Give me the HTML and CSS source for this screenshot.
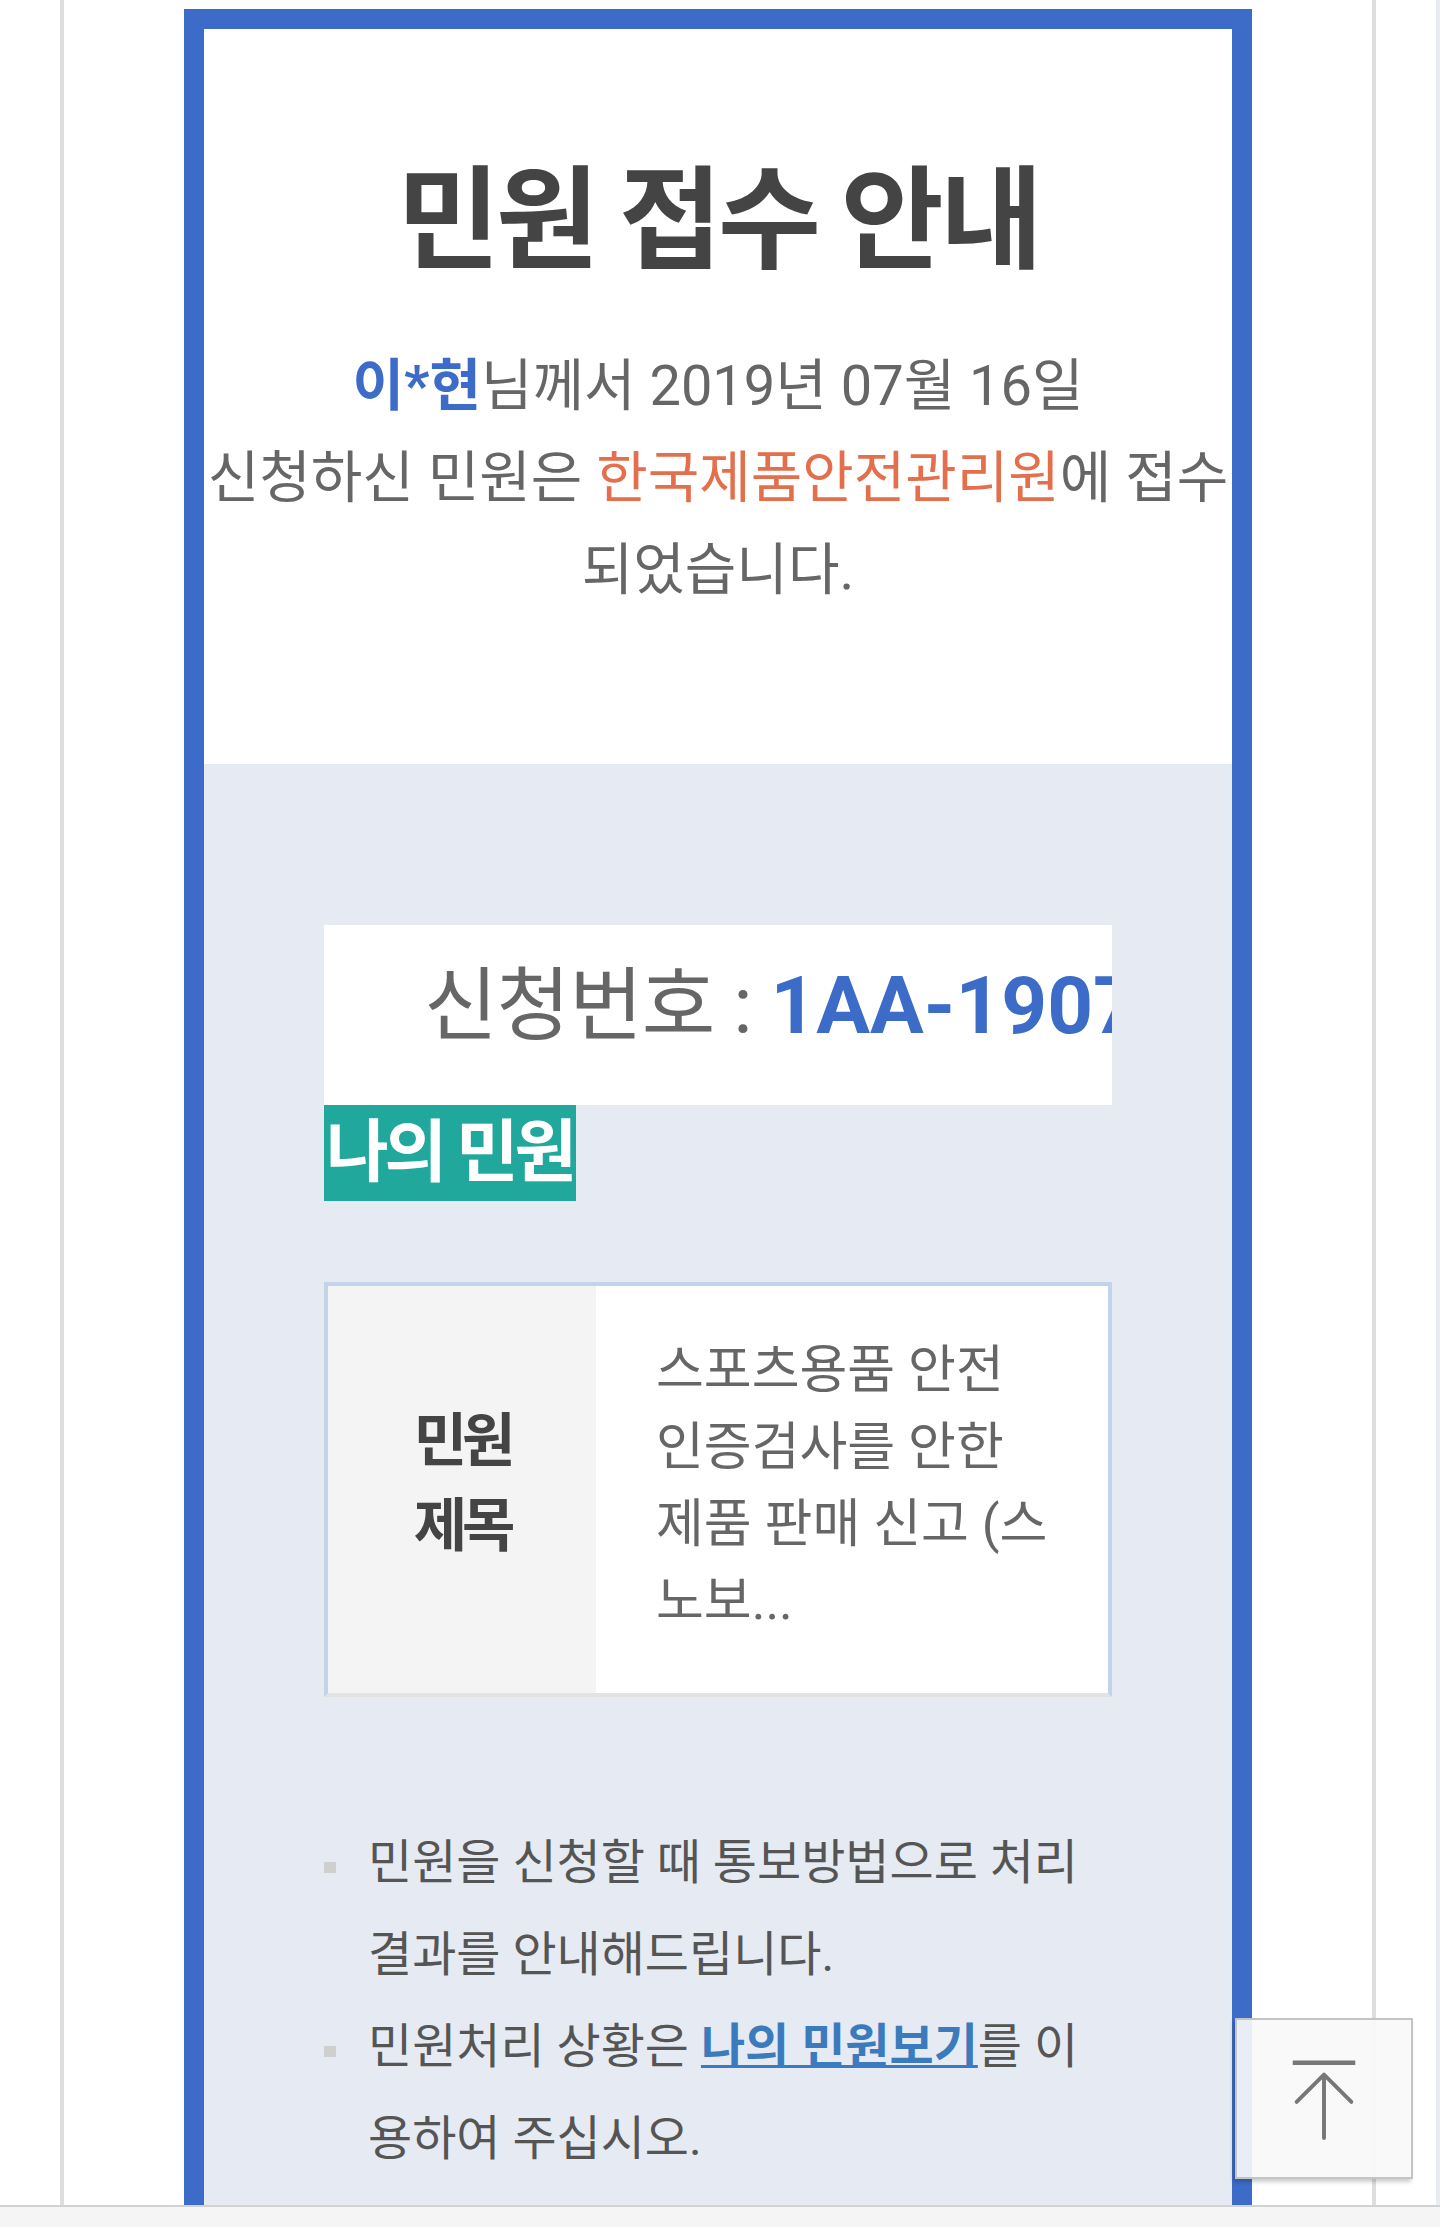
FILE: index.html
```html
<!DOCTYPE html>
<html lang="ko">
	<head>
		<meta charset="utf-8">
		<title>민원 접수 안내</title>
		<meta name="viewport" content="width=device-width, initial-scale=1" />
		<link rel="stylesheet" href="styles.css">
	</head>
	<body>
		<div class="screen">
			<div class="page">
				<div class="notice">
					<section class="intro">
						<h1>민원 접수 안내</h1>
						<p><strong class="name">이*현</strong>님께서 2019년 07월 16일<br>신청하신 민원은 <em class="org">한국제품안전관리원</em>에 접수<br>되었습니다.</p>
					</section>
					<section class="detail">
						<div class="reqno">신청번호 : <strong>1AA-1907-1600418</strong></div>
						<h2 class="badge">나의 민원</h2>
						<table class="summary">
							<tr>
								<th>민원<br>제목</th>
								<td>스포츠용품 안전<br>인증검사를 안한<br>제품 판매 신고 (스<br>노보...</td>
							</tr>
						</table>
						<ul class="guide">
							<li>민원을 신청할 때 통보방법으로 처리<br>결과를 안내해드립니다.</li>
							<li>민원처리 상황은 <a href="#">나의 민원보기</a>를 이<br>용하여 주십시오.</li>
						</ul>
					</section>
				</div>
			</div>
		</div>
		<div class="bottom-bar"></div>
		<a class="to-top" href="#">
			<svg viewBox="0 0 178 161" width="178" height="161">
				<line x1="57" y1="44" x2="121" y2="44" stroke="#777" stroke-width="4.5"/>
				<path d="M61 84 L89 56 L117 84 M89 57 V121" fill="none" stroke="#777" stroke-width="4" stroke-linecap="round" stroke-linejoin="round"/>
			</svg>
		</a>
	</body>
</html>
```

FILE: styles.css
```css
html, body { margin: 0; padding: 0; }
body {
	font-family: Roboto, "Noto Sans CJK KR", sans-serif;
	background: #fff;
	overflow: hidden;
}
h1, h2, p, ul { margin: 0; padding: 0; }
.screen {
	height: 2205px;
	overflow: hidden;
	border-right: 4px solid #e8ebf0;
}
.page {
	box-sizing: border-box;
	width: 1316px;
	margin-left: 60px;
	height: 100%;
	padding: 9px 120px 0;
	border-left: 4px solid #dedede;
	border-right: 4px solid #dedede;
}
.notice {
	border: 20px solid #3c6cc8;
	border-bottom: 0;
	min-height: 2400px;
	background: #e6ebf3;
}
.intro {
	background: #fff;
	text-align: center;
	padding: 120px 0 148px;
}
.intro h1 {
	font-size: 112px;
	line-height: 146px;
	letter-spacing: -4px;
	font-weight: 700;
	color: #444;
}
.intro p {
	margin-top: 45px;
	font-size: 56px;
	line-height: 92px;
	color: #666;
	white-space: nowrap;
}
.intro .name { color: #3c6cc8; font-weight: 700; }
.intro .org { color: #e36f4c; font-style: normal; }
.detail {
	padding: 161px 120px 200px;
}
.reqno {
	background: #fff;
	height: 162px;
	padding: 0 0 18px 100px;
	font-size: 80px;
	line-height: 162px;
	letter-spacing: -1px;
	color: #666;
	white-space: nowrap;
	overflow: hidden;
}
.reqno strong {
	color: #3c6cc8;
	letter-spacing: 0;
	font-weight: 700;
}
.badge {
	width: max-content;
	padding: 0 3px 0 2px;
	background: #20a89c;
	color: #fff;
	font-size: 68px;
	line-height: 96px;
	letter-spacing: -4px;
	font-weight: 700;
}
.summary {
	box-sizing: border-box;
	width: 100%;
	margin-top: 81px;
	border-spacing: 0;
	border: 4px solid #c3d3ea;
	border-bottom-color: #e3e3e3;
	background: #fff;
}
.summary th {
	width: 268px;
	padding: 0 0 12px;
	background: #f4f4f4;
	color: #444;
	font-size: 58px;
	line-height: 85px;
	letter-spacing: -5px;
	font-weight: 700;
	text-align: center;
	vertical-align: middle;
}
.summary td {
	padding: 46px 20px 53px 60px;
	color: #666;
	font-size: 52px;
	line-height: 77px;
	text-align: left;
}
.guide {
	margin-top: 120px;
	list-style: none;
}
.guide li {
	padding-left: 44px;
	font-size: 48px;
	line-height: 92px;
	color: #555;
	background: linear-gradient(#cfcfcf, #cfcfcf) no-repeat 0 45px / 12px 11px;
}
.guide a {
	color: #3b7bbd;
	font-weight: 700;
	text-decoration: underline;
	text-decoration-thickness: 3px;
}
.bottom-bar {
	height: 20px;
	border-top: 2px solid #d2d2d2;
	background: #f5f5f5;
}
.to-top {
	position: fixed;
	right: 27px;
	bottom: 48px;
	box-sizing: border-box;
	width: 178px;
	height: 161px;
	border: 2px solid #c4c4c4;
	background: rgba(248, 248, 248, 0.92);
	box-shadow: -2px 3px 4px rgba(0, 0, 0, 0.2);
	display: flex;
	align-items: center;
	justify-content: center;
}
.to-top svg { display: block; }
```
